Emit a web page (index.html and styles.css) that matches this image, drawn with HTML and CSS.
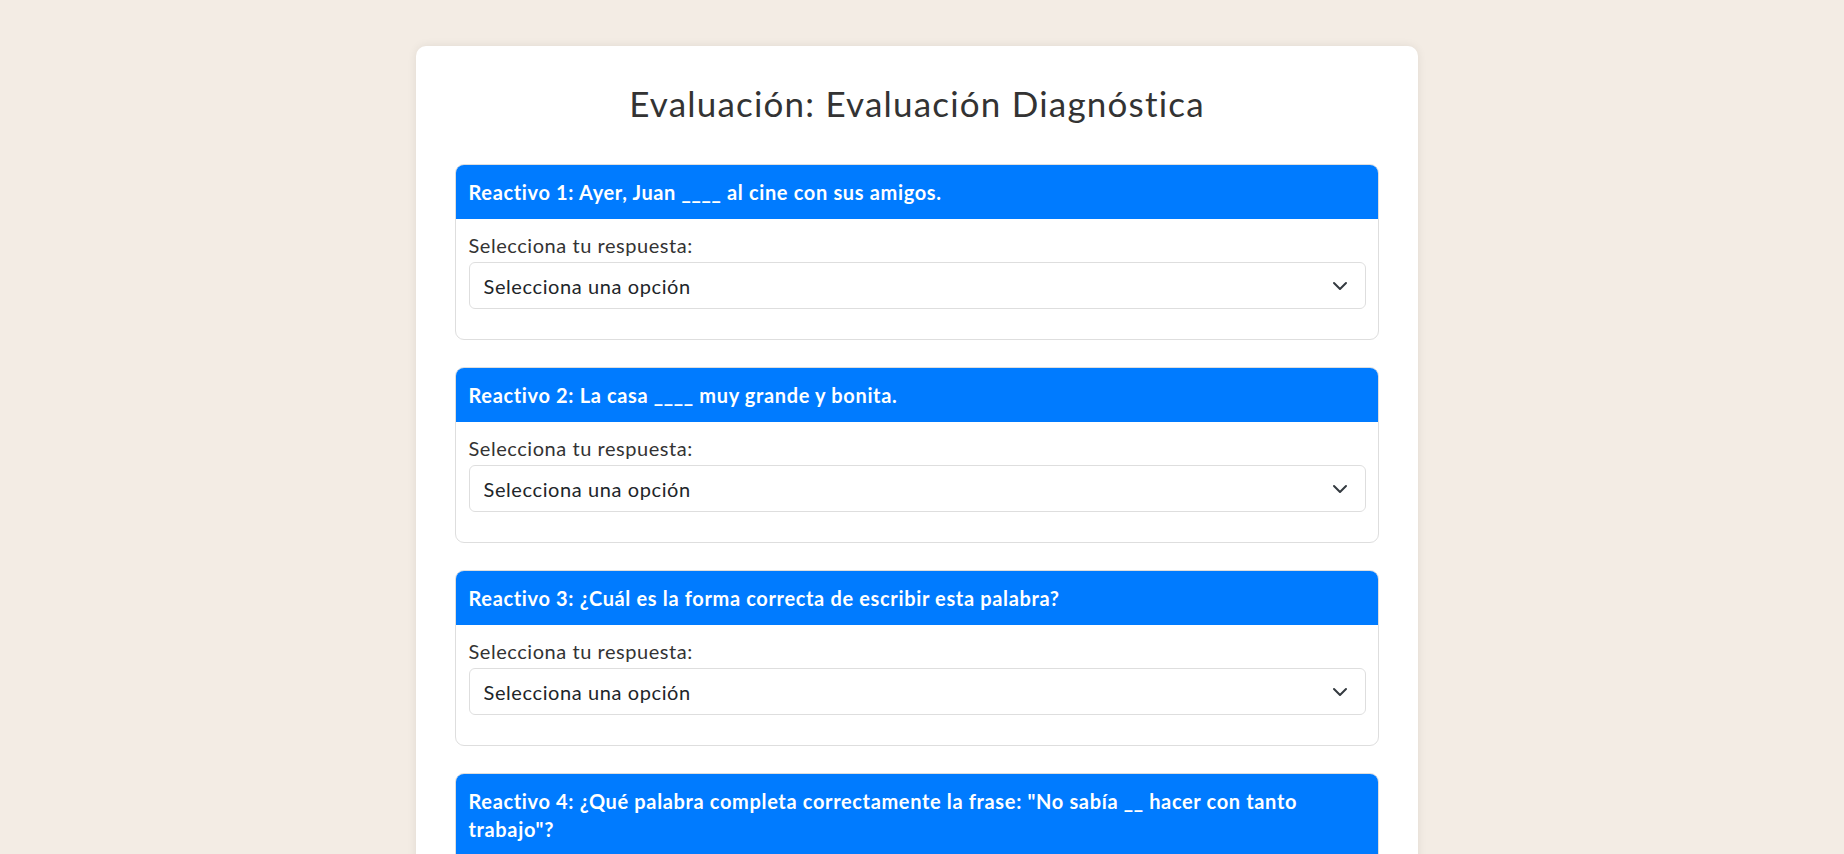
FILE: index.html
```html
<!DOCTYPE html>
<html lang="es">
<head>
<meta charset="utf-8">
<title>Evaluación Diagnóstica</title>
<link rel="stylesheet" href="styles.css">
</head>
<body>
<main class="container">
  <h1 class="title">Evaluación: Evaluación Diagnóstica</h1>

  <section class="card">
    <h2 class="card-header">Reactivo 1: Ayer, Juan ____ al cine con sus amigos.</h2>
    <div class="card-body">
      <label class="label" for="q1">Selecciona tu respuesta:</label>
      <div class="select-wrap">
        <select class="select" id="q1"><option>Selecciona una opción</option></select>
        <svg class="chevron" viewBox="0 0 16 16" width="16" height="16"><path d="M2 5l6 6 6-6" fill="none" stroke="#343a40" stroke-width="2" stroke-linecap="round" stroke-linejoin="round"/></svg>
      </div>
    </div>
  </section>

  <section class="card">
    <h2 class="card-header">Reactivo 2: La casa ____ muy grande y bonita.</h2>
    <div class="card-body">
      <label class="label" for="q2">Selecciona tu respuesta:</label>
      <div class="select-wrap">
        <select class="select" id="q2"><option>Selecciona una opción</option></select>
        <svg class="chevron" viewBox="0 0 16 16" width="16" height="16"><path d="M2 5l6 6 6-6" fill="none" stroke="#343a40" stroke-width="2" stroke-linecap="round" stroke-linejoin="round"/></svg>
      </div>
    </div>
  </section>

  <section class="card">
    <h2 class="card-header">Reactivo 3: ¿Cuál es la forma correcta de escribir esta palabra?</h2>
    <div class="card-body">
      <label class="label" for="q3">Selecciona tu respuesta:</label>
      <div class="select-wrap">
        <select class="select" id="q3"><option>Selecciona una opción</option></select>
        <svg class="chevron" viewBox="0 0 16 16" width="16" height="16"><path d="M2 5l6 6 6-6" fill="none" stroke="#343a40" stroke-width="2" stroke-linecap="round" stroke-linejoin="round"/></svg>
      </div>
    </div>
  </section>

  <section class="card">
    <h2 class="card-header">Reactivo 4: ¿Qué palabra completa correctamente la frase: "No sabía __ hacer con tanto trabajo"?</h2>
    <div class="card-body">
      <label class="label" for="q4">Selecciona tu respuesta:</label>
      <div class="select-wrap">
        <select class="select" id="q4"><option>Selecciona una opción</option></select>
        <svg class="chevron" viewBox="0 0 16 16" width="16" height="16"><path d="M2 5l6 6 6-6" fill="none" stroke="#343a40" stroke-width="2" stroke-linecap="round" stroke-linejoin="round"/></svg>
      </div>
    </div>
  </section>
</main>
</body>
</html>
```

FILE: styles.css
```css
* { box-sizing: border-box; }

body {
  margin: 0;
  padding: 46px 10px 40px 0;
  background: #f3ece4;
  font-family: Lato, "Open Sans", sans-serif;
  color: #333;
}

.container {
  width: 1002px;
  margin: 0 auto;
  background: #fff;
  border-radius: 10px;
  padding: 36px 39px 40px;
  box-shadow: 0 0 10px rgba(0, 0, 0, 0.08);
}

.title {
  margin: 0 0 40px;
  font-size: 35px;
  font-weight: 400;
  letter-spacing: 1.2px;
  line-height: 1.2;
  text-align: center;
  color: #333;
}

.card {
  border: 1px solid #dedede;
  border-radius: 9px;
  overflow: hidden;
  margin-bottom: 27px;
}

.card-header {
  margin: 0;
  background: #007bff;
  color: #fff;
  font-size: 20px;
  font-weight: 700;
  letter-spacing: 0.65px;
  line-height: 28px;
  padding: 13px 12.5px;
}

.card-body {
  padding: 13px 12.5px;
}

.label {
  display: block;
  font-size: 20px;
  letter-spacing: 0.55px;
  line-height: 27px;
  margin-bottom: 3px;
  color: #333;
}

.select-wrap {
  position: relative;
  margin-bottom: 17px;
}

.select {
  display: block;
  width: 100%;
  height: 47px;
  appearance: none;
  -webkit-appearance: none;
  border: 1px solid #dedede;
  border-radius: 6px;
  background: #fff;
  padding: 0 40px 0 14px;
  font-family: Lato, "Open Sans", sans-serif;
  font-size: 20px;
  letter-spacing: 0.6px;
  color: #212529;
}

.chevron {
  position: absolute;
  right: 18px;
  top: 16px;
  pointer-events: none;
}
```
